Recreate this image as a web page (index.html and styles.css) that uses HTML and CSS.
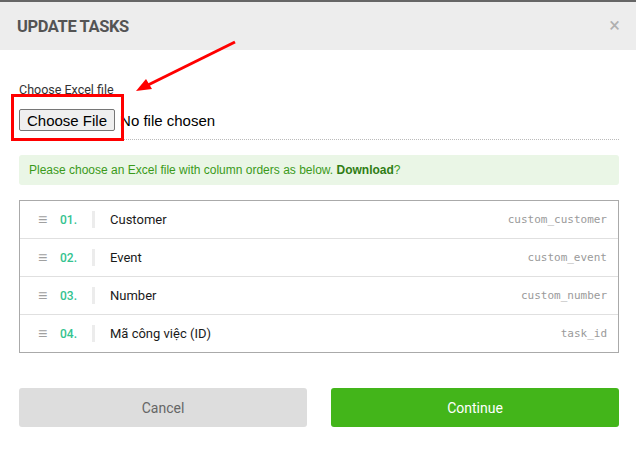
FILE: index.html
```html
<!DOCTYPE html>
<html>
<head>
<meta charset="utf-8">
<link rel="stylesheet" href="styles.css">
</head>
<body>
<div class="modal">
  <header class="modal-header">
    <h1 class="modal-title">UPDATE TASKS</h1>
    <span class="close">&times;</span>
  </header>
  <div class="modal-body">
    <label class="field-label">Choose Excel file</label>
    <div class="file-row">
      <span class="file-btn">Choose File</span>
      <span class="file-name">No file chosen</span>
    </div>
    <div class="info"><span>Please choose an Excel file with column orders as below. <b>Download</b>?</span></div>
    <ul class="cols">
      <li class="col-row"><span class="grip">&#8801;</span><span class="num">01.</span><span class="sep"></span><span class="name">Customer</span><span class="code">custom_customer</span></li>
      <li class="col-row"><span class="grip">&#8801;</span><span class="num">02.</span><span class="sep"></span><span class="name">Event</span><span class="code">custom_event</span></li>
      <li class="col-row"><span class="grip">&#8801;</span><span class="num">03.</span><span class="sep"></span><span class="name">Number</span><span class="code">custom_number</span></li>
      <li class="col-row"><span class="grip">&#8801;</span><span class="num">04.</span><span class="sep"></span><span class="name">Mã công việc (ID)</span><span class="code">task_id</span></li>
    </ul>
    <div class="actions">
      <button class="btn btn-cancel">Cancel</button>
      <button class="btn btn-continue">Continue</button>
    </div>
  </div>
</div>
<svg class="annotation" width="636" height="456" viewBox="0 0 636 456">
  <rect x="12.5" y="95.5" width="110" height="44" fill="none" stroke="#f00" stroke-width="3"/>
  <line x1="235" y1="42" x2="148" y2="85" stroke="#f00" stroke-width="3"/>
  <polygon points="136,91 146,79 152,89" fill="#f00"/>
</svg>
</body>
</html>
```
FILE: styles.css
```css
* { box-sizing: border-box; }
html, body { margin: 0; padding: 0; background: #fff; }
body { width: 636px; height: 456px; overflow: hidden; position: relative; font-family: Roboto, "Liberation Sans", sans-serif; }
.modal { border-top: 2px solid #666; }
.modal-header {
  height: 48px;
  background: #ededed;
  display: flex;
  align-items: center;
  justify-content: space-between;
  padding: 0 16px 0 17px;
}
.modal-title {
  margin: 0;
  font-size: 16.5px;
  font-weight: 700;
  color: #545454;
  letter-spacing: -0.4px;
}
.close { font-size: 20px; color: #b0b0b0; line-height: 1; margin-top: -2px; }
.modal-body { padding: 32px 17px 0 19px; }
.field-label { display: block; font-size: 12.5px; color: #333; line-height: 16px; }
.file-row {
  display: flex;
  align-items: center;
  gap: 5px;
  margin-top: 11px;
  padding-bottom: 8px;
  border-bottom: 1px dotted #bbb;
  font-family: "Liberation Sans", Arial, sans-serif;
  font-size: 15px;
}
.file-btn {
  height: 22px;
  padding: 0 7px;
  border: 1px solid #767676;
  border-radius: 2px;
  background: #efefef;
  color: #000;
  display: flex;
  align-items: center;
}
.file-name { color: #000; }
.info {
  margin-top: 15px;
  height: 30px;
  display: flex;
  align-items: center;
  padding-left: 10px;
  background: #eaf6e6;
  border-radius: 3px;
  font-family: "Liberation Sans", Arial, sans-serif;
  font-size: 12px;
  color: #3a9a1a;
}
.info b { color: #2f7d14; }
.cols {
  list-style: none;
  margin: 15px 0 0;
  padding: 0;
  border: 1px solid #aaa;
}
.col-row {
  height: 38px;
  display: flex;
  align-items: center;
  border-top: 1px solid #e0e0e0;
  padding: 0 11px 0 18px;
}
.col-row:first-child { border-top: none; height: 37px; }
.grip { color: #a0a0a0; font-size: 16px; width: 22px; }
.num { color: #34c38f; font-size: 12px; font-weight: 500; width: 32px; }
.sep { width: 3px; height: 17px; background: #ececec; margin-right: 15px; }
.name { font-size: 13px; color: #1a1a1a; flex: 1; }
.code { font-family: "DejaVu Sans Mono", "Liberation Mono", monospace; font-size: 11px; color: #9a9a9a; }
.actions {
  display: grid;
  grid-template-columns: 1fr 1fr;
  gap: 24px;
  margin-top: 35px;
}
.btn {
  height: 39px;
  border: none;
  border-radius: 3px;
  font-family: Roboto, sans-serif;
  font-size: 14px;
}
.btn-cancel { background: #dddddd; color: #666; }
.btn-continue { background: #43b51a; color: #fff; font-weight: 400; }
.annotation { position: absolute; left: 0; top: 0; pointer-events: none; }
```
